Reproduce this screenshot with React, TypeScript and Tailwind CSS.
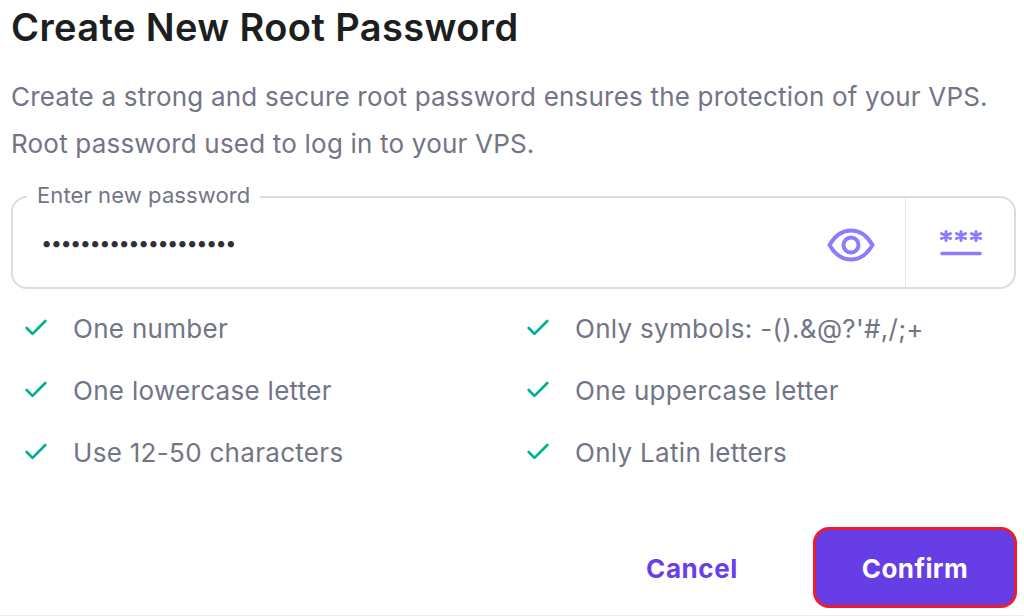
import { Check } from "lucide-react";

const rules = [
  ["One number", "Only symbols: -().&@?'#,/;+"],
  ["One lowercase letter", "One uppercase letter"],
  ["Use 12-50 characters", "Only Latin letters"],
];

function Rule({ label }: { label: string }) {
  return (
    <div className="flex items-center h-[62px]">
      <Check size={28} strokeWidth={2.25} className="text-[#00b090] ml-[11px] mr-[23px] shrink-0" />
      <span className="text-[26px] text-[#727586] tracking-[0.3px]">{label}</span>
    </div>
  );
}

export default function App() {
  return (
    <div className="w-[1024px] h-[616px] bg-white overflow-hidden pl-[11px] pr-[8px] border-b border-[#eeeeee] font-['Inter','Liberation_Sans',sans-serif]">
      <h1 className="text-[38px] leading-[44px] font-semibold tracking-[0.4px] text-[#1d1e20] pt-[5px] h-[53px] box-content">
        Create New Root Password
      </h1>
      <p className="mt-[15px] text-[26px] leading-[47px] tracking-[0.2px] text-[#727586]">
        Create a strong and secure root password ensures the protection of your VPS.
        <br />
        Root password used to log in to your VPS.
      </p>

      <div className="relative mt-[29px] h-[93px] border-2 border-[#dadce0] rounded-[16px] flex items-center">
        <span className="absolute left-[14px] -top-[17px] bg-white px-[10px] text-[22px] leading-[28px] tracking-[0.1px] text-[#727586]">
          Enter new password
        </span>
        <span className="flex-1 pl-[28px] text-[#2f3136] text-[20px] tracking-[-1.55px] leading-none">
          ••••••••••••••••••••
        </span>
        <div className="w-[108px] flex justify-center pt-[4px]">
          <svg width="48" height="34" viewBox="0 0 48 34" fill="none" stroke="#8c7dff" strokeWidth="4">
            <path d="M2.5 17C8 7.5 15 2.5 24 2.5S40 7.5 45.500 17C40 26.500 33 31.500 24 31.500S8 26.500 2.500 17Z" strokeLinejoin="round" />
            <circle cx="24" cy="17" r="7.500" />
          </svg>
        </div>
        <div className="w-[109px] h-full border-l border-[#e8e9ec] flex flex-col items-center justify-center pl-[2px]">
          <svg width="44" height="26" viewBox="0 0 44 26" fill="none" stroke="#8c7dff" strokeLinecap="round">
            <g strokeWidth="3">
              <path d="M7 1.500v9M2.500 3.500l9 5M11.500 3.500l-9 5" />
              <path d="M22 1.500v9M17.500 3.500l9 5M26.500 3.500l-9 5" />
              <path d="M37 1.500v9M32.500 3.500l9 5M41.500 3.500l-9 5" />
            </g>
            <path d="M3 23.500H41" strokeWidth="3.500" />
          </svg>
        </div>
      </div>

      <div className="grid grid-cols-[502px_1fr] mt-[8px]">
        {rules.flat().map(label => (
          <Rule key={label} label={label} />
        ))}
      </div>

      <div className="flex items-center justify-end mt-[44px] -mr-[1px]">
        <button type="button" className="text-[26px] font-bold tracking-[0.6px] text-[#6a3fe8] mr-[75px] pt-[2px]">
          Cancel
        </button>
        <button
          type="button"
          className="w-[204px] h-[81px] rounded-[16px] border-[3px] border-[#ed1c2e] bg-[#673de6] text-white text-[26px] font-bold tracking-[0.4px] pt-[2px]"
        >
          Confirm
        </button>
      </div>
    </div>
  );
}
